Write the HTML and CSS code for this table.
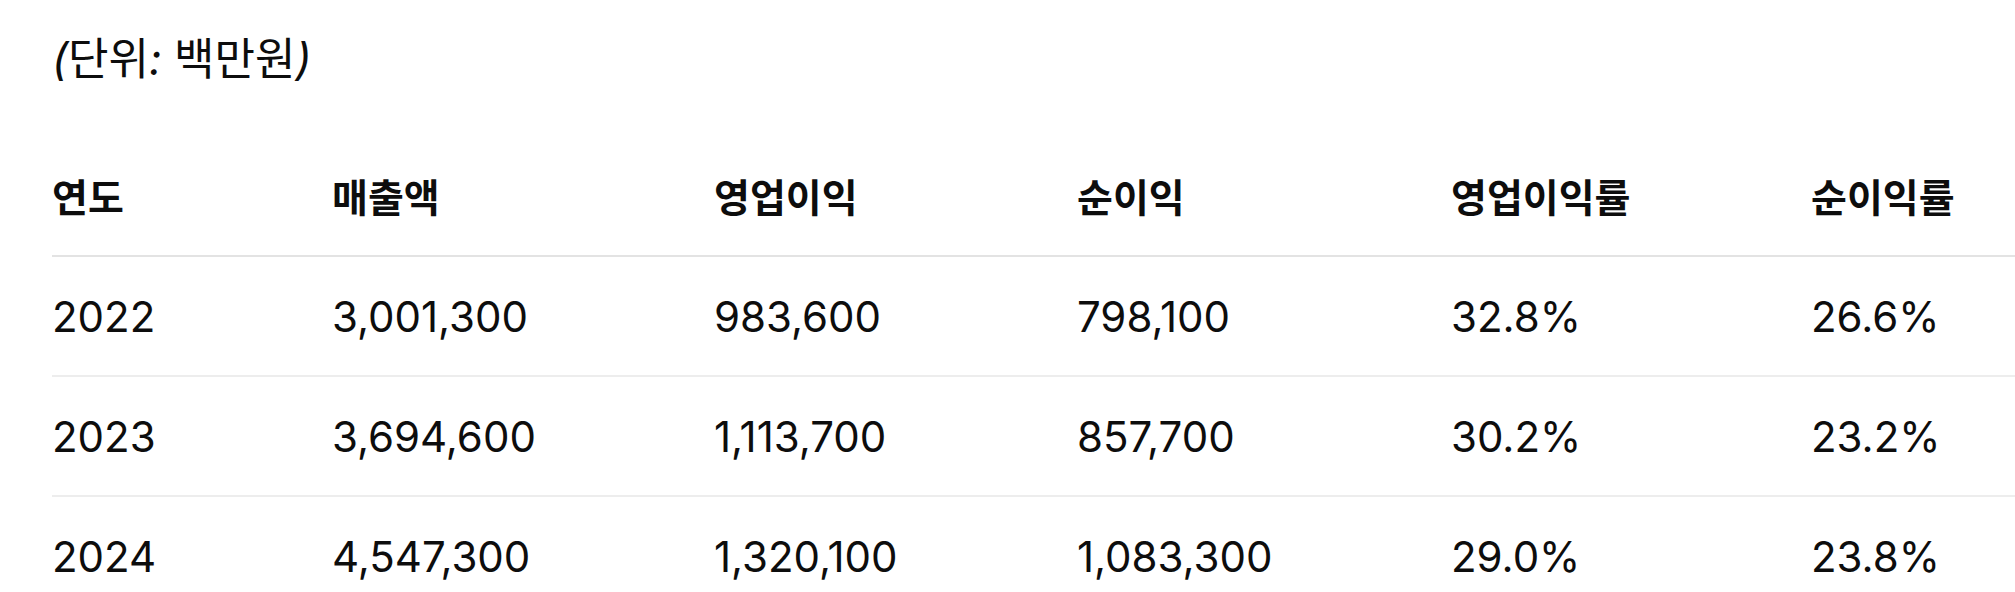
FILE: index.html
```html
<!DOCTYPE html>
<html lang="ko">
<head>
<meta charset="utf-8">
<title>재무 요약</title>
<link rel="stylesheet" href="styles.css">
</head>
<body>
<div class="page">
  <p class="unit"><em>(<span class="ko">단위</span>: <span class="ko">백만원</span>)</em></p>
  <table class="fin">
    <colgroup>
      <col class="c1"><col class="c2"><col class="c3"><col class="c4"><col class="c5"><col class="c6">
    </colgroup>
    <thead>
      <tr><th>연도</th><th>매출액</th><th>영업이익</th><th>순이익</th><th>영업이익률</th><th>순이익률</th></tr>
    </thead>
    <tbody>
      <tr><td>2022</td><td>3,001,300</td><td>983,600</td><td>798,100</td><td>32.8%</td><td>26.6%</td></tr>
      <tr><td>2023</td><td>3,694,600</td><td>1,113,700</td><td>857,700</td><td>30.2%</td><td>23.2%</td></tr>
      <tr><td>2024</td><td>4,547,300</td><td>1,320,100</td><td>1,083,300</td><td>29.0%</td><td>23.8%</td></tr>
    </tbody>
  </table>
</div>
</body>
</html>
```

FILE: styles.css
```css
html, body {
  margin: 0;
  padding: 0;
  background: #ffffff;
}
body {
  font-family: Inter, "Noto Sans CJK KR", sans-serif;
  color: #0d0d0d;
  overflow: hidden;
}
.page {
  padding: 0 0 0 52px;
}
.unit {
  margin: 0;
  padding-top: 30px;
  font-size: 44px;
  line-height: 58px;
  height: 104px;
}
.unit em {
  font-style: italic;
}
.unit .ko {
  font-style: normal;
}
.fin {
  border-collapse: collapse;
  table-layout: fixed;
  width: 1963px;
}
.c1 { width: 280px; }
.c2 { width: 382px; }
.c3 { width: 363px; }
.c4 { width: 374px; }
.c5 { width: 360px; }
.c6 { width: auto; }
.fin th, .fin td {
  padding: 0;
  text-align: left;
  vertical-align: middle;
  white-space: nowrap;
}
.fin th {
  font-weight: 600;
  font-size: 39px;
  height: 121px;
}
.fin thead tr {
  border-bottom: 2px solid #e3e3e3;
}
.fin td {
  font-size: 42px;
  font-weight: 400;
  height: 118px;
}
.fin tbody tr {
  border-bottom: 2px solid #ededed;
}
```
